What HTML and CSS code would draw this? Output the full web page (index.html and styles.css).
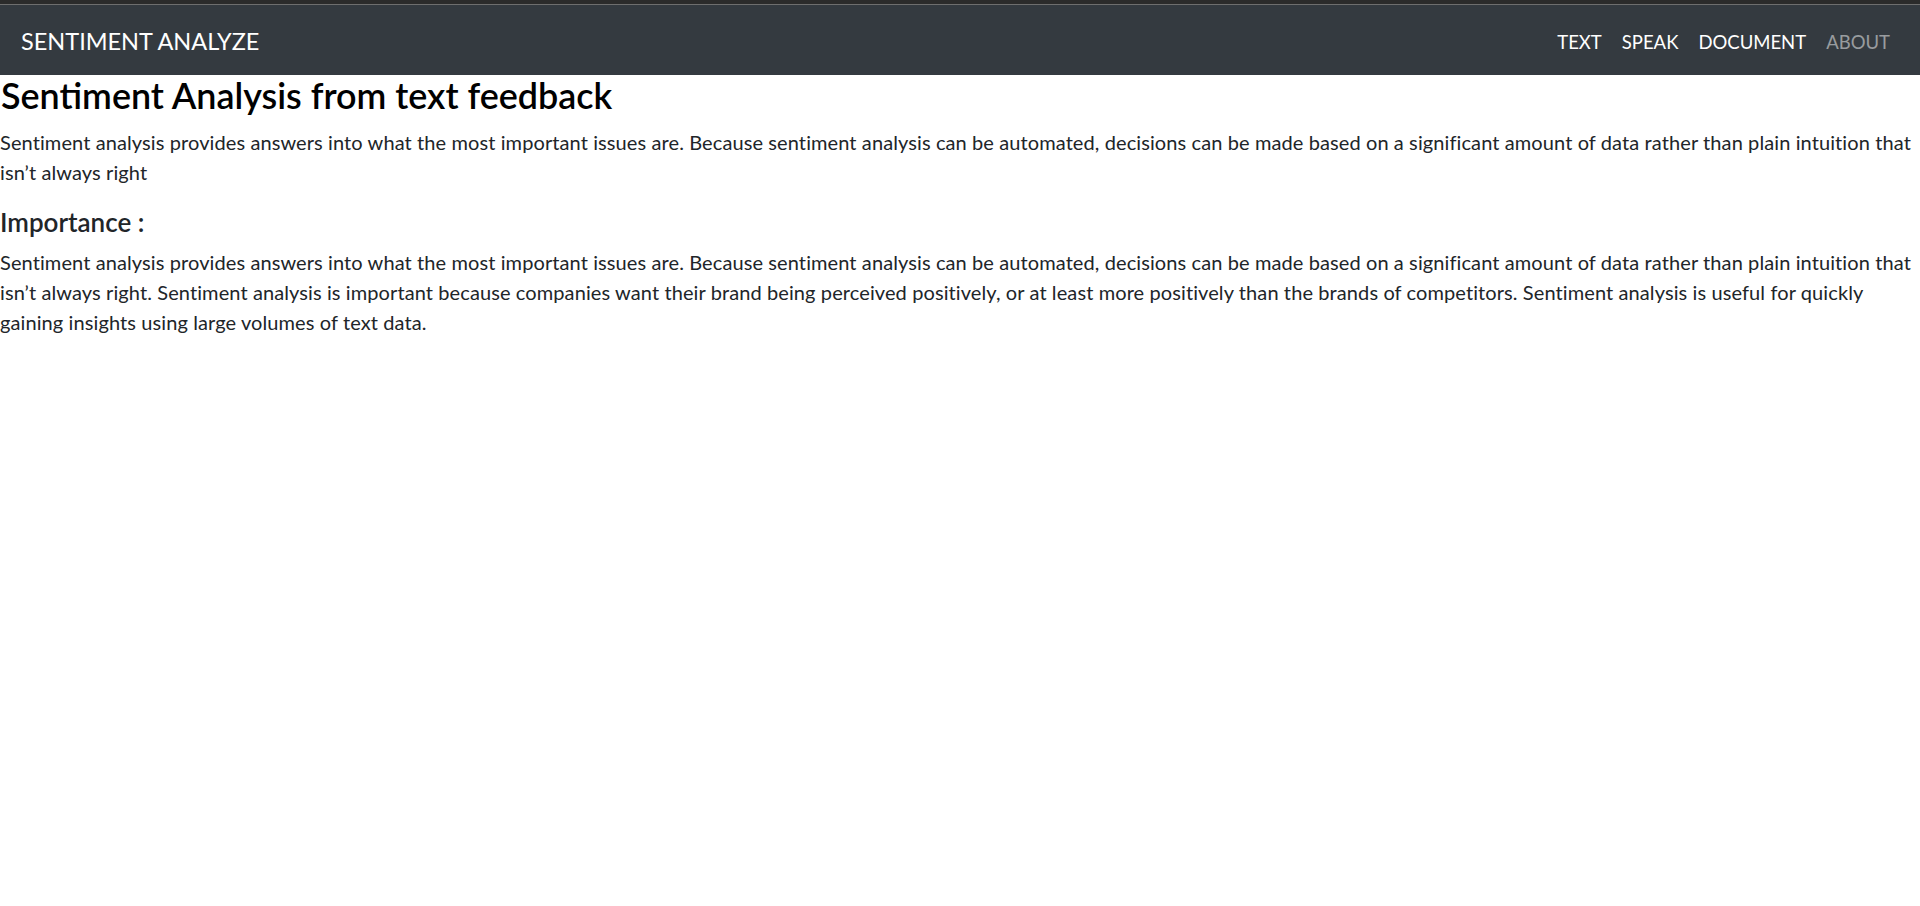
FILE: index.html
```html
<!DOCTYPE html>
<html lang="en">
<head>
<meta charset="utf-8">
<title>Sentiment Analyze</title>
<link rel="stylesheet" href="styles.css">
</head>
<body>
<div class="topstrip"></div>
<nav class="navbar">
  <a class="brand" href="#">SENTIMENT ANALYZE</a>
  <ul class="nav">
    <li><a class="nav-link" href="#">TEXT</a></li>
    <li><a class="nav-link" href="#">SPEAK</a></li>
    <li><a class="nav-link" href="#">DOCUMENT</a></li>
    <li><a class="nav-link muted" href="#">ABOUT</a></li>
  </ul>
</nav>
<main class="content">
  <h1 class="title">Sentiment Analysis from text feedback</h1>
  <p class="text">Sentiment analysis provides answers into what the most important issues are. Because sentiment analysis can be automated, decisions can be made based on a significant amount of data rather than plain intuition that isn’t always right</p>
  <h5 class="subtitle">Importance :</h5>
  <p class="text">Sentiment analysis provides answers into what the most important issues are. Because sentiment analysis can be automated, decisions can be made based on a significant amount of data rather than plain intuition that isn’t always right. Sentiment analysis is important because companies want their brand being perceived positively, or at least more positively than the brands of competitors. Sentiment analysis is useful for quickly gaining insights using large volumes of text data.</p>
</main>
</body>
</html>
```
FILE: styles.css
```css
* { box-sizing: border-box; }
html, body { margin: 0; padding: 0; }
body {
  font-family: Lato, "Open Sans", sans-serif;
  color: #212529;
  background: #fff;
  font-size: 20px;
  line-height: 1.5;
}
.topstrip {
  height: 5px;
  background: #2b2b2b;
  border-bottom: 1px solid #6e6e6e;
}
.navbar {
  height: 70px;
  background: #343a40;
  display: flex;
  align-items: center;
  justify-content: space-between;
  padding: 3px 20px 0 21px;
}
.brand {
  color: #fff;
  text-decoration: none;
  font-size: 23.5px;
}
.nav {
  list-style: none;
  margin: 0;
  padding: 2px 0 0;
  display: flex;
}
.nav-link {
  display: block;
  padding: 0 10px;
  color: #fff;
  text-decoration: none;
  font-size: 18.5px;
}
.nav-link.muted { color: rgba(255,255,255,.5); }
.content { padding: 0; }
.title {
  margin: 0 0 10px;
  font-size: 35.9px;
  line-height: 42px;
  font-weight: 600;
  color: #000;
  padding: 0 0 0 1px;
}
.text {
  margin: 0 0 20px;
  font-size: 20px;
  line-height: 30px;
  letter-spacing: 0.1px;
}
.subtitle {
  margin: 0 0 10px;
  font-size: 26px;
  line-height: 30px;
  font-weight: 600;
  color: #212529;
}
```
